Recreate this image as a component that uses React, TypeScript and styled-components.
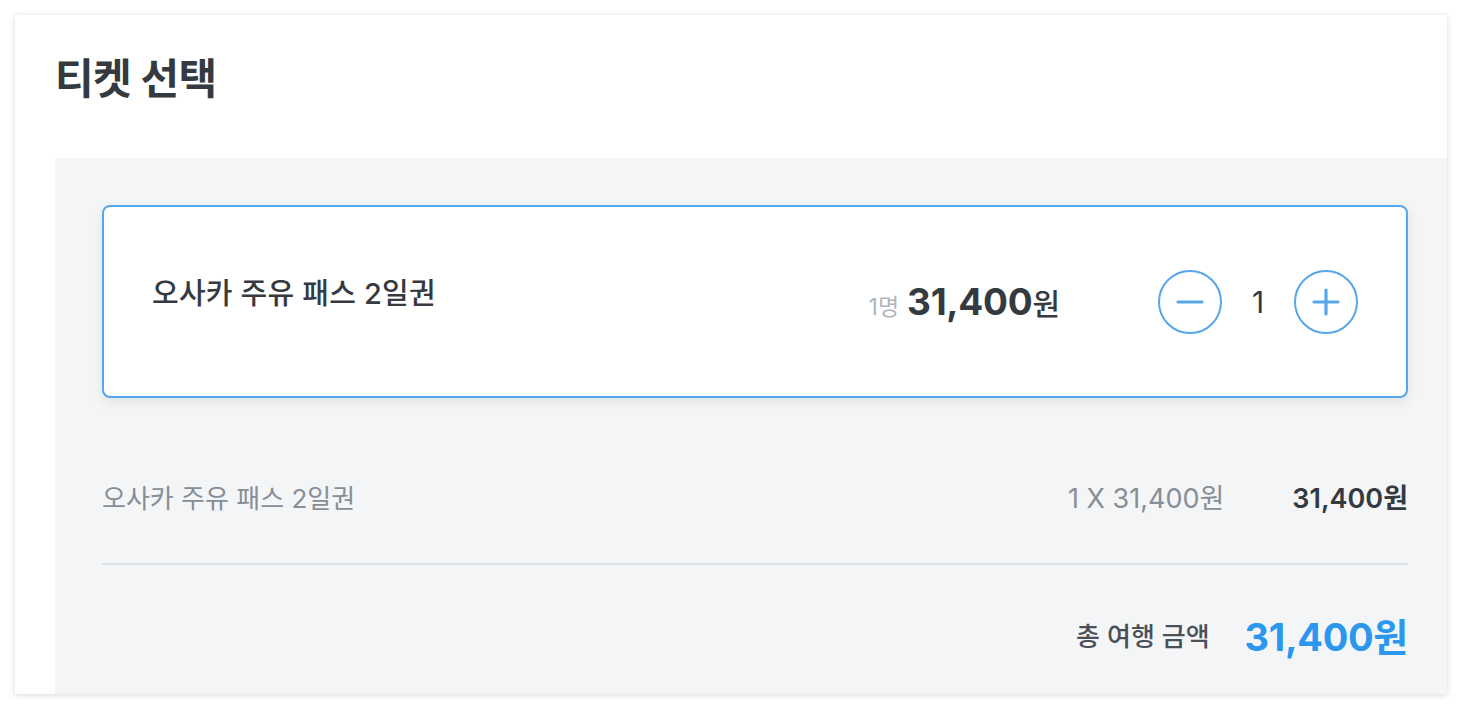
import React from 'react';
import styled, { createGlobalStyle } from 'styled-components';

const GlobalStyle = createGlobalStyle`
  html, body {
    margin: 0;
    padding: 0;
    background: #ffffff;
  }
  body {
    font-family: Inter, "Noto Sans CJK KR", sans-serif;
    color: #343a40;
  }
`;

const Page = styled.div`
  padding: 15px 15px 16px 15px;
`;

const Card = styled.section`
  background: #fff;
  box-shadow: 0 1px 6px rgba(0, 0, 0, 0.16);
  padding-left: 40px;
`;

const Title = styled.h2`
  margin: 0;
  padding: 38px 0 53px 0;
  font-size: 42px;
  line-height: 52px;
  font-weight: 700;
  color: #343a40;
  letter-spacing: -0.6px;
`;

const Panel = styled.div`
  background: #f4f5f7;
  padding: 47px 39px 0 47px;
  height: 536px;
  box-sizing: border-box;
`;

const TicketCard = styled.div`
  display: flex;
  align-items: center;
  height: 193px;
  box-sizing: border-box;
  background: #fff;
  border: 2px solid #55a6ea;
  border-radius: 8px;
  box-shadow: 0 4px 12px rgba(0, 0, 0, 0.08);
  padding: 0 48px 0 48px;
`;

const TicketName = styled.div`
  flex: 1;
  font-size: 29px;
  font-weight: 500;
  color: #343a40;
  margin-top: -22px;
  letter-spacing: 0.2px;
`;

const Price = styled.div`
  display: flex;
  align-items: baseline;
  margin-right: 98px;
  color: #343a40;
`;

const PerPerson = styled.span`
  font-size: 23px;
  color: #adb5bd;
  margin-right: 8px;
`;

const Amount = styled.span`
  font-size: 37px;
  font-weight: 700;
  letter-spacing: -0.3px;
`;

const Won = styled.span`
  font-size: 30px;
  font-weight: 500;
`;

const Stepper = styled.div`
  display: flex;
  align-items: center;
`;

const RoundButton = styled.button`
  width: 64px;
  height: 64px;
  border-radius: 50%;
  border: 2px solid #55a6ea;
  background: #fff;
  padding: 0;
  display: flex;
  align-items: center;
  justify-content: center;
  cursor: pointer;
`;

const Count = styled.span`
  width: 72px;
  text-align: center;
  font-size: 30px;
  font-weight: 400;
  color: #343a40;
`;

const SummaryRow = styled.div`
  display: flex;
  align-items: center;
  height: 165px;
  box-sizing: border-box;
  padding-top: 32px;
`;

const SummaryName = styled.div`
  flex: 1;
  font-size: 26px;
  color: #868e96;
`;

const SummaryCalc = styled.div`
  font-size: 27px;
  color: #868e96;
  margin-right: 68px;
`;

const SummaryTotal = styled.div`
  font-size: 27px;
  font-weight: 600;
  color: #343a40;
`;

const Divider = styled.hr`
  margin: 0;
  border: 0;
  border-top: 2px solid #dfe2e7;
`;

const TotalRow = styled.div`
  display: flex;
  justify-content: flex-end;
  align-items: center;
  height: 138px;
`;

const TotalLabel = styled.span`
  font-size: 26px;
  font-weight: 500;
  color: #495057;
  margin-right: 35px;
`;

const TotalAmount = styled.span`
  font-size: 38px;
  font-weight: 700;
  color: #2b97ee;
  letter-spacing: -0.3px;
`;

const Icon = ({ plus }: { plus?: boolean }) => (
  <svg width="28" height="28" viewBox="0 0 28 28">
    <line x1="2" y1="14" x2="26" y2="14" stroke="#55a6ea" strokeWidth="3.2" strokeLinecap="round" />
    {plus && <line x1="14" y1="2" x2="14" y2="26" stroke="#55a6ea" strokeWidth="3.2" strokeLinecap="round" />}
  </svg>
);

export default function App() {
  return (
    <Page>
      <GlobalStyle />
      <Card>
        <Title>티켓 선택</Title>
        <Panel>
          <TicketCard>
            <TicketName>오사카 주유 패스 2일권</TicketName>
            <Price>
              <PerPerson>1명</PerPerson>
              <Amount>31,400</Amount>
              <Won>원</Won>
            </Price>
            <Stepper>
              <RoundButton aria-label="감소">
                <Icon />
              </RoundButton>
              <Count>1</Count>
              <RoundButton aria-label="증가">
                <Icon plus />
              </RoundButton>
            </Stepper>
          </TicketCard>
          <SummaryRow>
            <SummaryName>오사카 주유 패스 2일권</SummaryName>
            <SummaryCalc>1 X 31,400원</SummaryCalc>
            <SummaryTotal>31,400원</SummaryTotal>
          </SummaryRow>
          <Divider />
          <TotalRow>
            <TotalLabel>총 여행 금액</TotalLabel>
            <TotalAmount>31,400원</TotalAmount>
          </TotalRow>
        </Panel>
      </Card>
    </Page>
  );
}
